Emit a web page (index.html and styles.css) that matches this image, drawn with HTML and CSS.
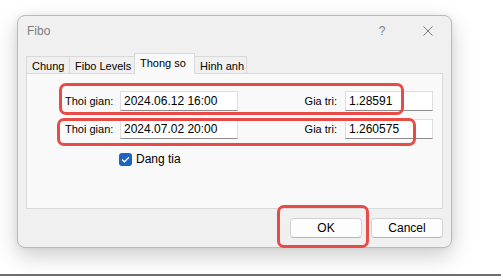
FILE: index.html
```html
<!DOCTYPE html>
<html lang="vi">
<head>
  <meta charset="UTF-8">
  <meta name="viewport" content="width=device-width, initial-scale=1.0">
  <title>Fibo</title>
  <link rel="stylesheet" href="styles.css">
</head>
<body>
  <div class="screen">
    <div class="dialog">
      <div class="titlebar">
        <span class="title">Fibo</span>
        <span class="tb-btn help">?</span>
        <span class="tb-btn close">
          <svg width="10" height="10" viewBox="0 0 10 10">
            <path d="M0.5 0.5 L9.5 9.5 M9.5 0.5 L0.5 9.5" stroke="#7a7a7a" stroke-width="1" fill="none"/>
          </svg>
        </span>
      </div>

      <div class="tabs">
        <div class="tab tab-chung">Chung</div>
        <div class="tab tab-levels">Fibo Levels</div>
        <div class="tab tab-params active">Thong so</div>
        <div class="tab tab-image">Hinh anh</div>
      </div>

      <div class="panel">
        <div class="row">
          <span class="lbl lbl-time">Thoi gian:</span>
          <input class="field field-time" type="text" value="2024.06.12 16:00" readonly>
          <span class="lbl lbl-val">Gia tri:</span>
          <input class="field field-val" type="text" value="1.28591" readonly>
        </div>
        <div class="row">
          <span class="lbl lbl-time">Thoi gian:</span>
          <input class="field field-time" type="text" value="2024.07.02 20:00" readonly>
          <span class="lbl lbl-val">Gia tri:</span>
          <input class="field field-val" type="text" value="1.260575" readonly>
        </div>
        <label class="check">
          <span class="box">
            <svg width="9" height="7" viewBox="0 0 9 7">
              <path d="M1 3.6 L3.4 5.8 L8 1.2" stroke="#fff" stroke-width="1.3" fill="none"/>
            </svg>
          </span>
          Dang tia
        </label>
      </div>

      <div class="actions">
        <button class="btn">OK</button>
        <button class="btn">Cancel</button>
      </div>

      <!-- khung do danh dau -->
      <div class="mark mark-1"></div>
      <div class="mark mark-2"></div>
      <div class="mark mark-3"></div>
    </div>
    <div class="baseline"></div>
  </div>
</body>
</html>
```

FILE: styles.css
```css
* {
  box-sizing: border-box;
}

body {
  margin: 0;
  background-color: #fff;
  font-family: "Liberation Sans", Arial, sans-serif;
  font-size: 11px;
  color: #000;
}

.screen {
  height: 276px;
  display: flex;
  flex-direction: column;
  overflow: hidden;
}

.dialog {
  position: relative;
  width: 435px;
  height: 233px;
  margin: 15px 0 0 17px;
  background-color: #f0f0f0;
  border: 1px solid #b9b9b9;
  border-radius: 8px;
  box-shadow: 0 8px 22px rgba(0, 0, 0, 0.2), 0 0 6px rgba(0, 0, 0, 0.06);
}

.titlebar {
  display: flex;
  align-items: center;
  height: 30px;
}

.title {
  flex: 1;
  padding-left: 9px;
  font-size: 12px;
  color: #7d7d7d;
}

.tb-btn {
  width: 46px;
  display: flex;
  justify-content: center;
  align-items: center;
  color: #7d7d7d;
  font-size: 12px;
}

.tabs {
  display: flex;
  align-items: flex-end;
  height: 20px;
  margin: 7px 8px 0 8px;
}

.tab {
  height: 17px;
  display: flex;
  align-items: center;
  padding-left: 5px;
  padding-top: 1px;
  background-color: #f0f0f0;
  border: 1px solid #d9d9d9;
  border-bottom: none;
  margin-right: -1px;
}

.tab-chung { width: 44px; }
.tab-levels { width: 66px; }
.tab-image { width: 53px; }

.tab.active {
  position: relative;
  z-index: 1;
  width: 61px;
  height: 21px;
  margin-bottom: -1px;
  padding-bottom: 3px;
  background-color: #f9f9f9;
}

.panel {
  height: 136px;
  margin: 0 8px;
  padding: 17px 0 0 38px;
  background-color: #f9f9f9;
  border: 1px solid #d9d9d9;
}

.row {
  display: flex;
  align-items: center;
  height: 20px;
  margin-bottom: 8px;
}

.lbl-time {
  width: 55px;
}

.lbl-val {
  width: 107px;
  padding-right: 8px;
  text-align: right;
}

.field {
  height: 20px;
  padding: 0 0 0 3px;
  font-family: inherit;
  font-size: 12px;
  color: #000;
  background-color: #fff;
  border: 1px solid #dedede;
  border-bottom-color: #8c8c8c;
  border-radius: 0;
  outline: none;
}

.field-time { width: 118px; }
.field-val { width: 88px; }

.check {
  display: flex;
  align-items: center;
  gap: 4px;
  margin: 13px 0 0 54px;
  font-size: 12px;
}

.box {
  width: 13px;
  height: 13px;
  display: flex;
  justify-content: center;
  align-items: center;
  background-color: #1d63c4;
  border-radius: 3px;
}

.actions {
  display: flex;
  justify-content: flex-end;
  gap: 9px;
  margin: 9px 8px 0 8px;
}

.btn {
  width: 72px;
  height: 20px;
  padding: 0;
  font-family: inherit;
  font-size: 12px;
  color: #000;
  background-color: #fdfdfd;
  border: 1px solid #d2d2d2;
  border-bottom-color: #b5b5b5;
  border-radius: 4px;
}

.mark {
  position: absolute;
  border: 3px solid #e84a45;
  border-radius: 7px;
}

.mark-1 {
  left: 41px;
  top: 67px;
  width: 345px;
  height: 32px;
}

.mark-2 {
  left: 39px;
  top: 102px;
  width: 359px;
  height: 28px;
}

.mark-3 {
  left: 259px;
  top: 189px;
  width: 92px;
  height: 43px;
}

.baseline {
  margin-top: auto;
  height: 2px;
  background-color: #6e6e6e;
}
```
